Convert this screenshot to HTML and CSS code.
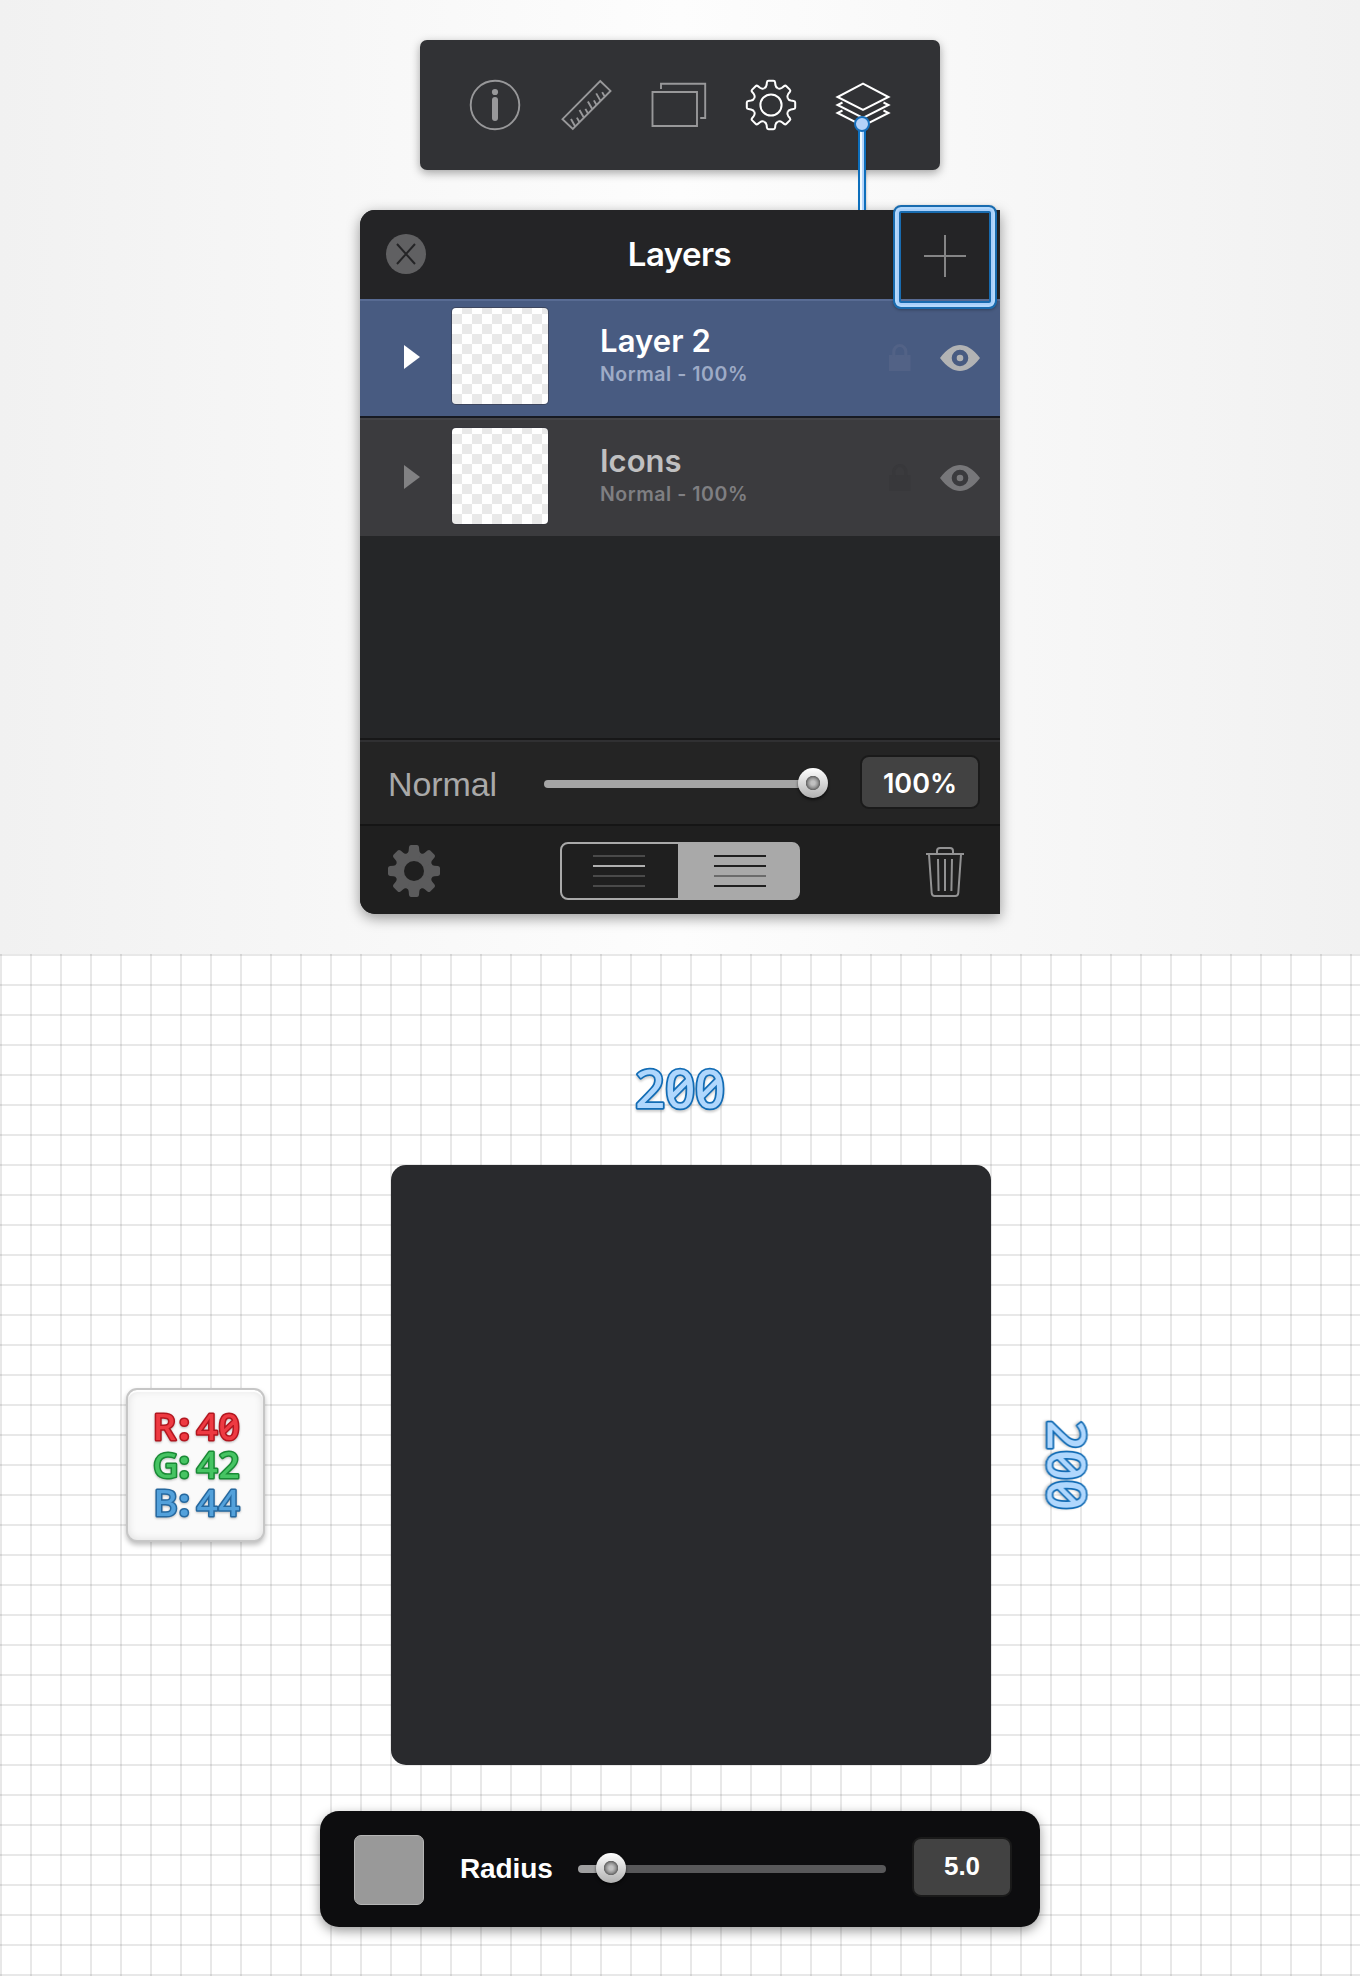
FILE: index.html
```html
<!DOCTYPE html>
<html lang="en">
<head>
<meta charset="utf-8">
<title>Layers</title>
<link rel="stylesheet" href="styles.css">
</head>
<body>
<svg class="defs" width="0" height="0" aria-hidden="true">
  <defs>
    <path id="tooth" d="M-6.9 -16.7C-5.4 -17.3 -4.7 -18.2 -4.4 -20L-4.1 -22.6Q-3.9 -24.2 -2.4 -24.2H2.4Q3.9 -24.2 4.1 -22.6L4.4 -20C4.7 -18.2 5.4 -17.3 6.9 -16.7"/>
    <path id="cog" d="M0 0L-7.3 -17.6C-6 -18.2 -5.5 -19 -5.3 -20.5L-5 -24Q-4.6 -26 -3 -26H3Q4.6 -26 5 -24L5.3 -20.5C5.5 -19 6 -18.2 7.3 -17.6Z"/>
    <g id="lock"><path d="M0 12h21.5v16H0z"/><path d="M4.8 14V8.5a6 6 0 0 1 12 0V14" fill="none" stroke="currentColor" stroke-width="3.2"/></g>
    <path id="eye" fill-rule="evenodd" d="M0 13C7 3.5 14 0 20 0s13 3.500 20 13c-7 9.500-14 13-20 13S7 22.500 0 13zM20 4.700a8.300 8.300 0 1 0 0 16.600a8.300 8.300 0 1 0 0-16.600zM20 9.700a3.300 3.300 0 1 1 0 6.600a3.300 3.300 0 1 1 0-6.600z"/>
  </defs>
</svg>

<section class="stage">
  <nav class="toolbar">
    <svg width="54" height="54" viewBox="-27 -27 54 54"><circle r="24.300" class="dim"/><circle cy="-13" r="3.100" class="dimfill"/><path d="M0 -5V13" stroke="#98989a" stroke-width="6" stroke-linecap="round"/></svg>
    <svg class="ruler" width="54" height="54" viewBox="-2.500 -2 54 54"><path class="dim" d="M38.700 1L49 10.900L11.300 49L1 39.200ZM13.700 46.500L9.500 39M22.300 37.500L18 30M30.700 29L26.400 21.500M39 20.900L34.700 13.400M18 42.200l-2.600-4.600M26.500 33.500l-2.600-4.600M35 25l-2.600-4.600M43.300 16.700l-2.600-4.600"/></svg>
    <svg class="windows" width="56" height="54" viewBox="651 78 56 54"><path class="dim" d="M652.500 92h44.500v34H652.500zM661 89v-5.200h44.200V118h-5"/></svg>
    <svg class="gear" width="54" height="54" viewBox="-27 -27 54 54"><g class="lit"><circle r="10.600"/><use href="#tooth"/><use href="#tooth" transform="rotate(45)"/><use href="#tooth" transform="rotate(90)"/><use href="#tooth" transform="rotate(135)"/><use href="#tooth" transform="rotate(180)"/><use href="#tooth" transform="rotate(225)"/><use href="#tooth" transform="rotate(270)"/><use href="#tooth" transform="rotate(315)"/></g></svg>
    <svg class="stack" width="56" height="54" viewBox="835 78 56 54"><path class="lit" d="M863 83.700L888.500 97L863 110L837.500 97ZM842.500 102.500L837.500 105L863 118L888.500 105L883.500 102.500M842.500 110.500L837.500 113L863 126L888.500 113L883.500 110.500"/></svg>
    <div class="lead"></div>
    <div class="dot"></div>
  </nav>

  <div class="panel">
    <header class="head">
      <svg class="close" width="40" height="40" viewBox="0 0 40 40"><circle cx="20" cy="20" r="20" fill="#606062"/><path d="M11 10l18 20M29 10L11 30" stroke="#242426" stroke-width="2"/></svg>
      <h1 class="title">Layers</h1>
      <div class="add"><svg width="42" height="42" viewBox="0 0 42 42"><path d="M0 20h42M21 -1v42" stroke="#858586" stroke-width="2"/></svg></div>
    </header>
    <div class="row active">
      <svg class="arrow" width="16" height="24"><path d="M0 0l16 12L0 24z" fill="currentColor"/></svg>
      <div class="thumb"></div>
      <div class="info"><div class="name n1">Layer 2</div><div class="mode">Normal - 100%</div></div>
      <svg class="lock" width="22" height="28" fill="currentColor"><use href="#lock"/></svg>
      <svg class="eye" width="40" height="26" fill="currentColor"><use href="#eye"/></svg>
    </div>
    <div class="row">
      <svg class="arrow" width="16" height="24"><path d="M0 0l16 12L0 24z" fill="currentColor"/></svg>
      <div class="thumb"></div>
      <div class="info"><div class="name n2">Icons</div><div class="mode">Normal - 100%</div></div>
      <svg class="lock" width="22" height="28" fill="currentColor"><use href="#lock"/></svg>
      <svg class="eye" width="40" height="26" fill="currentColor"><use href="#eye"/></svg>
    </div>
    <div class="blend">
      <span class="blend-name">Normal</span>
      <div class="track"><div class="knob end"></div></div>
      <div class="value">100%</div>
    </div>
    <footer class="foot">
      <svg width="52" height="52" viewBox="-26 -26 52 52"><g fill="#5b5b5c"><circle r="18.500"/><use href="#cog"/><use href="#cog" transform="rotate(45)"/><use href="#cog" transform="rotate(90)"/><use href="#cog" transform="rotate(135)"/><use href="#cog" transform="rotate(180)"/><use href="#cog" transform="rotate(225)"/><use href="#cog" transform="rotate(270)"/><use href="#cog" transform="rotate(315)"/></g><circle r="10" fill="#1f1f1f"/></svg>
      <div class="segments">
        <svg width="52" height="32" stroke="#4a4a4a" stroke-width="2"><path d="M0 1h52M0 21h52M0 31h52"/><path d="M0 11h52" stroke="#b0b0b0"/></svg>
        <svg class="on" width="52" height="32" stroke="#1f1f1f" stroke-width="2"><path d="M0 1h52M0 11h52M0 31h52"/><path d="M0 21h52" stroke="#6b6b6b"/></svg>
      </div>
      <svg class="trash" width="38" height="50" viewBox="926 847 38 50" fill="none" stroke="#929293" stroke-width="2"><path d="M926 854h38M937 854v-3q0-3 3-3h10q3 0 3 3v3M929 854.500l2.700 38.500q.3 3 3 3h20.600q2.700 0 3-3l2.700-38.500M938 859l.6 32M945 859v32M952 859l-.6 32" /></svg>
    </footer>
  </div>
</section>

<section class="canvas">
  <svg class="width-label" width="100" height="60"><text class="dimension" x="5" y="47.500">200</text></svg>
  <div class="middle">
    <div class="rgb">
      <svg width="100" height="120">
        <text class="code red" x="6.800 33 50.500 72.500" y="34.700">R<tspan class="colon">:</tspan>40</text>
        <text class="code green" x="7 33 50.500 72.500" y="72.700"><tspan class="wide">G</tspan><tspan class="colon">:</tspan>42</text>
        <text class="code blue" x="7.500 33 50.500 72.500" y="110.700">B<tspan class="colon">:</tspan>44</text>
      </svg>
    </div>
    <div class="shape"></div>
    <svg class="height-label" width="60" height="100"><text class="dimension" transform="translate(58.500 0) rotate(90)" x="5" y="47.500">200</text></svg>
  </div>
  <div class="radius-bar">
    <div class="swatch"></div>
    <span class="radius-name">Radius</span>
    <div class="track low"><div class="knob"></div></div>
    <div class="value small">5.0</div>
  </div>
</section>
</body>
</html>
```
FILE: styles.css
```css
* { box-sizing: border-box; }
body { margin: 0; width: 1360px; background: #fff; font-family: Inter, sans-serif; }
svg { display: block; flex: none; overflow: visible; }
.defs { position: absolute; }

.stage {
  height: 954px;
  padding-top: 40px;
  display: flex;
  flex-direction: column;
  align-items: center;
  gap: 40px;
  background: linear-gradient(90deg, #f1f1f1, #fdfdfd 50%, #f1f1f1);
}
.toolbar {
  position: relative;
  width: 520px;
  height: 130px;
  border-radius: 7px;
  background: #313235;
  box-shadow: 0 3px 10px rgba(0, 0, 0, .35);
  display: flex;
  align-items: center;
  justify-content: space-between;
  padding: 0 49px 0 48px;
}
.dim { fill: none; stroke: #98989a; stroke-width: 1.9; }
.dimfill { fill: #98989a; }
.lit { fill: none; stroke: #fff; stroke-width: 2; }
.lead {
  position: absolute;
  left: 438px;
  top: 88px;
  width: 8px;
  height: 82px;
  background: linear-gradient(90deg, #0d6fbc 2px, #f0faff 2px 4px, #b4d5fb 4px 6px, #0d6fbc 6px);
  box-shadow: 1px 0 2px rgba(0, 0, 0, .15);
}
.dot {
  position: absolute;
  left: 434px;
  top: 76px;
  width: 16px;
  height: 16px;
  border: 2px solid #1670bd;
  border-radius: 50%;
  background: #b4d2f9;
}

.panel {
  width: 640px;
  height: 704px;
  border-radius: 15px 0 0 15px;
  background: #252628;
  box-shadow: 0 4px 14px rgba(0, 0, 0, .4);
  display: flex;
  flex-direction: column;
}
.head {
  height: 89px;
  flex: none;
  display: flex;
  align-items: center;
  justify-content: center;
  position: relative;
  background: #242426;
  border-radius: 15px 0 0 0;
}
.close { position: absolute; left: 26px; top: 24px; }
.title { margin: 0 1px 1px 0; font-size: 33px; line-height: 40px; font-weight: 600; color: #fff; letter-spacing: -.55px; }
.add {
  position: absolute;
  z-index: 1;
  left: 533px;
  top: -5px;
  width: 104px;
  height: 104px;
  border: 2px solid #186baf;
  border-radius: 8px;
  box-shadow: inset 0 0 0 2px #b4d9fd, inset 0 0 0 4px #a9d0fb, inset 0 0 0 6px #186baf, 0 1px 3px rgba(0, 0, 0, .3);
  display: flex;
  align-items: center;
  justify-content: center;
}
.row {
  height: 118px;
  flex: none;
  display: flex;
  align-items: center;
  padding-left: 44px;
  background: #3b3b3e;
  box-shadow: inset 0 2px #434346;
  color: #818183;
}
.row.active {
  height: 119px;
  padding-bottom: 1px;
  border-bottom: 2px solid #171a22;
  background: #485b81;
  box-shadow: inset 0 2px #586b93;
  color: #fff;
}
.thumb {
  width: 96px;
  height: 96px;
  margin: 0 52px 2px 32px;
  border-radius: 4px;
  background: repeating-conic-gradient(#e9e9e9 0 25%, #fff 0 50%) 0 -4px / 20px 20px;
  box-shadow: 0 0 0 1px rgba(50, 50, 60, .5);
}
.info { width: 289px; align-self: flex-start; margin-top: 26px; }
.active .info { margin-top: 25px; }
.name { font-size: 31px; line-height: 34px; font-weight: 600; color: #c0c0c1; white-space: nowrap; }
.active .name { color: #fff; }
.n1 { letter-spacing: .1px; }
.n2 { letter-spacing: 0; }
.mode { font-size: 19.5px; line-height: 33px; font-weight: 600; color: #7f7f82; letter-spacing: .55px; white-space: nowrap; }
.active .mode { color: #9eabc6; }
.lock { color: #38383b; margin-right: 29px; }
.active .lock { color: #526286; }
.active .thumb, .active .arrow, .active .lock { position: relative; }
.eye { margin-top: 2px; color: #77777a; }
.active .eye { color: #b2b3b4; }

.blend {
  margin-top: auto;
  height: 88px;
  flex: none;
  border-top: 2px solid #171718;
  border-bottom: 2px solid #151515;
  box-shadow: inset 0 2px #303032;
  background: #242424;
  display: flex;
  align-items: center;
  padding: 0 22px 0 28px;
}
.blend-name { width: 156px; font: 34px/40px "Liberation Sans", sans-serif; color: #a9a9a9; margin-top: 4px; letter-spacing: -.1px; }
.track { position: relative; width: 284px; height: 8px; margin-top: 4px; border-radius: 4px; background: linear-gradient(90deg, #a5a5a5 262px, transparent 262px); }
.track.low { width: 308px; background: linear-gradient(90deg, #a0a0a1 33px, #58585a 33px); }
.knob {
  position: absolute;
  left: 18px;
  top: -12px;
  width: 30px;
  height: 30px;
  border-radius: 50%;
  background: radial-gradient(circle, #c0c0c0 0 2px, #999 4.500px, #656565 6.800px, transparent 7.500px), linear-gradient(#fff, #b0b0b0);
  box-shadow: 0 2px 3px rgba(0, 0, 0, .6);
}
.knob.end { left: 254px; top: -12px; }
.value {
  width: 116px;
  height: 50px;
  margin-left: 34px;
  border-radius: 7px;
  background: #424242;
  box-shadow: 0 0 0 2px #1a1a1a;
  color: #fff;
  font-size: 27px;
  font-weight: 600;
  line-height: 53px;
  text-align: center;
  letter-spacing: 0;
}
.foot {
  height: 88px;
  flex: none;
  background: #1f1f1f;
  border-radius: 0 0 0 15px;
  display: flex;
  align-items: center;
  justify-content: space-between;
  padding: 2px 36px 0 28px;
}
.segments {
  width: 240px;
  height: 58px;
  margin-right: 6px;
  border: 2px solid #a9a9a9;
  border-radius: 8px;
  background: linear-gradient(90deg, transparent 116px, #a9a9a9 116px);
  display: flex;
  align-items: center;
  padding-left: 31px;
  gap: 69px;
}
.trash { margin-top: 2px; }

.canvas {
  height: 1022px;
  padding-top: 106px;
  background:
    linear-gradient(rgba(0, 0, 0, .09) 2px, transparent 2px) 0 0 / 30px 30px,
    linear-gradient(90deg, rgba(0, 0, 0, .09) 2px, transparent 2px) 0 0 / 30px 30px,
    #fff;
}
.width-label { margin: 0 auto 45px; }
.dimension {
  font: 500 53px "Noto Sans", sans-serif;
  font-feature-settings: "zero";
  letter-spacing: -.4px;
  fill: #b0d7fd;
  stroke: #126cb5;
  stroke-width: 3.500px;
  stroke-linejoin: round;
  paint-order: stroke;
  filter: drop-shadow(0 2px 1px rgba(0, 0, 0, .2));
}

.middle { height: 600px; display: flex; align-items: center; padding-left: 126px; }
.rgb {
  width: 139px;
  height: 154px;
  border: 2px solid #c6c6c6;
  border-radius: 11px;
  background: #fafafa;
  box-shadow: inset 0 2px 1px #fff, inset 0 0 8px rgba(0, 0, 0, .12), 0 3px 5px rgba(0, 0, 0, .25);
  display: flex;
  align-items: center;
  justify-content: center;
}
.code {
  font: 500 37px "Noto Sans", sans-serif;
  font-feature-settings: "zero";
  stroke-width: 3px;
  stroke-linejoin: round;
  paint-order: stroke;
  filter: drop-shadow(0 1px 1px rgba(0, 0, 0, .25));
}
.colon { font-weight: 800; }
.wide { font-size: 35px; }
.red { fill: #ee3a42; stroke: #b3161f; }
.green { fill: #46c463; stroke: #198a35; }
.blue { fill: #53a1db; stroke: #25689f; }
.shape { width: 600px; height: 600px; margin: 0 46px 0 126px; border-radius: 15px; background: #292a2d; }

.radius-bar {
  width: 720px;
  height: 116px;
  margin: 46px auto 0;
  border-radius: 19px;
  background: #0d0d0f;
  box-shadow: 0 4px 12px rgba(0, 0, 0, .4);
  display: flex;
  align-items: center;
  padding-left: 34px;
}
.swatch { width: 70px; height: 70px; margin: 2px 36px 0 0; border: 1.500px solid #b5b5b5; border-radius: 7px; background: #999; }
.radius-name { width: 118px; font: bold 28px/40px "Liberation Sans", sans-serif; color: #fff; letter-spacing: -.1px; }
.radius-bar .track { margin-top: 0; }
.value.small { width: 96px; height: 56px; margin: -4px 0 0 28px; font: bold 26px/54px "Liberation Sans", sans-serif; }
```
